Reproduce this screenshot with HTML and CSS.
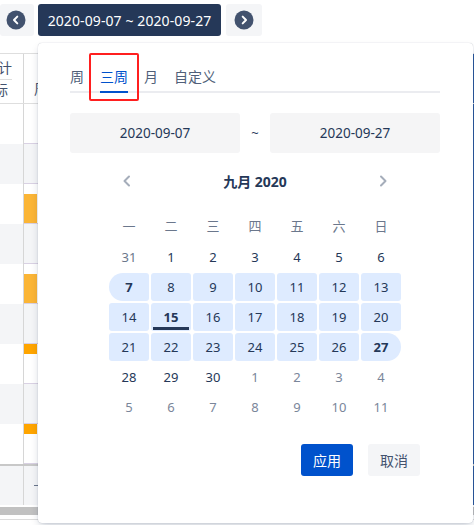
FILE: index.html
```html
<!DOCTYPE html>
<html lang="zh">
<head>
<meta charset="utf-8">
<link rel="stylesheet" href="styles.css">
</head>
<body>
<div class="page">
  <div class="toolbar">
    <button class="nav-btn prev" aria-label="上一段">
      <svg width="20" height="20" viewBox="0 0 20 20"><circle cx="10" cy="10" r="9.5" fill="#42526e"/><path d="M11.3 6.6 L8 10 L11.3 13.4" fill="none" stroke="#fff" stroke-width="2" stroke-linecap="round" stroke-linejoin="round"/></svg>
    </button>
    <button class="range-btn">2020-09-07 ~ 2020-09-27</button>
    <button class="nav-btn next" aria-label="下一段">
      <svg width="20" height="20" viewBox="0 0 20 20"><circle cx="10" cy="10" r="9.5" fill="#42526e"/><path d="M8.7 6.6 L12 10 L8.7 13.4" fill="none" stroke="#fff" stroke-width="2" stroke-linecap="round" stroke-linejoin="round"/></svg>
    </button>
  </div>

  <div class="table">
    <div class="row head">
      <div class="c1"><span class="h-top">计</span><span class="h-bot">际</span></div>
      <div class="c2"><span class="h-mid">周</span></div>
      <div class="c3"></div>
    </div>
    <div class="row"><div class="c1"></div><div class="c2"></div><div class="c3"></div></div>
    <div class="row alt"><div class="c1"></div><div class="c2"></div><div class="c3"></div></div>
    <div class="row"><div class="c1"></div><div class="c2"><div class="bar bar-lo"></div></div><div class="c3"></div></div>
    <div class="row alt"><div class="c1"></div><div class="c2"></div><div class="c3"></div></div>
    <div class="row"><div class="c1"></div><div class="c2"><div class="bar bar-lo"></div></div><div class="c3"></div></div>
    <div class="row alt"><div class="c1"></div><div class="c2"></div><div class="c3"></div></div>
    <div class="row"><div class="c1"></div><div class="c2"><div class="bar bar-hi"></div></div><div class="c3"></div></div>
    <div class="row alt"><div class="c1"></div><div class="c2"></div><div class="c3"></div></div>
    <div class="row"><div class="c1"></div><div class="c2"><div class="bar bar-hi"></div></div><div class="c3"></div></div>
    <div class="row foot"><div class="c1"></div><div class="c2"><span class="dash"></span></div><div class="c3"></div></div>
    <div class="scrollbar"></div>
    <div class="bottom-line"></div>
  </div>

  <div class="popup">
    <div class="tabs">
      <span class="tab">周</span>
      <span class="tab active">三周</span>
      <span class="tab">月</span>
      <span class="tab">自定义</span>
    </div>
    <div class="highlight"></div>

    <div class="inputs">
      <div class="date-input">2020-09-07</div>
      <span class="tilde">~</span>
      <div class="date-input">2020-09-27</div>
    </div>

    <div class="month-head">
      <svg class="chev" width="14" height="14" viewBox="0 0 14 14"><path d="M9 2.5 L4.5 7 L9 11.5" fill="none" stroke="#a5adba" stroke-width="2" stroke-linecap="round" stroke-linejoin="round"/></svg>
      <span class="month-title">九月 2020</span>
      <svg class="chev" width="14" height="14" viewBox="0 0 14 14"><path d="M5 2.5 L9.5 7 L5 11.5" fill="none" stroke="#a5adba" stroke-width="2" stroke-linecap="round" stroke-linejoin="round"/></svg>
    </div>

    <div class="weekdays">
      <span>一</span><span>二</span><span>三</span><span>四</span><span>五</span><span>六</span><span>日</span>
    </div>

    <div class="days">
      <span class="d prev-m">31</span><span class="d">1</span><span class="d">2</span><span class="d">3</span><span class="d">4</span><span class="d">5</span><span class="d">6</span>
      <span class="d in start">7</span><span class="d in">8</span><span class="d in">9</span><span class="d in">10</span><span class="d in">11</span><span class="d in">12</span><span class="d in">13</span>
      <span class="d in">14</span><span class="d in today">15</span><span class="d in">16</span><span class="d in">17</span><span class="d in">18</span><span class="d in">19</span><span class="d in">20</span>
      <span class="d in">21</span><span class="d in">22</span><span class="d in">23</span><span class="d in">24</span><span class="d in">25</span><span class="d in">26</span><span class="d in end">27</span>
      <span class="d">28</span><span class="d">29</span><span class="d">30</span><span class="d next-m">1</span><span class="d next-m">2</span><span class="d next-m">3</span><span class="d next-m">4</span>
      <span class="d next-m">5</span><span class="d next-m">6</span><span class="d next-m">7</span><span class="d next-m">8</span><span class="d next-m">9</span><span class="d next-m">10</span><span class="d next-m">11</span>
    </div>

    <div class="actions">
      <button class="btn primary">应用</button>
      <button class="btn subtle">取消</button>
    </div>
  </div>
</div>
</body>
</html>
```

FILE: styles.css
```css
* { box-sizing: border-box; }

html, body {
  margin: 0;
  padding: 0;
  background: #fff;
}

body {
  font-family: "Noto Sans", "Noto Sans CJK SC", sans-serif;
  color: #253858;
}

.page {
  position: relative;
  width: 474px;
  height: 525px;
  overflow: hidden;
}

button {
  font-family: inherit;
  border: 0;
  margin: 0;
  padding: 0;
  cursor: pointer;
}

/* toolbar */
.toolbar {
  display: flex;
  align-items: center;
  gap: 4px;
  padding-top: 4px;
  height: 36px;
}

.nav-btn {
  width: 34px;
  height: 32px;
  border-radius: 3px;
  background: #f4f5f7;
  display: flex;
  align-items: center;
  justify-content: center;
}

.nav-btn.prev { padding-right: 2px; }
.nav-btn.next { width: 36px; margin-left: 1px; }

.range-btn {
  width: 183px;
  height: 32px;
  border-radius: 3px;
  background: #253858;
  color: #fff;
  font-size: 14px;
  letter-spacing: 0.1px;
}

/* background table */
.table {
  margin-top: 17px;
  display: flex;
  flex-direction: column;
}

.row {
  display: flex;
  height: 40px;
  background: #fff;
}

.row.alt { background: #f4f5f7; }

.row .c1 {
  width: 24px;
  border-right: 1px solid #d6d6d6;
}

.row .c2 {
  flex: 1;
  border-bottom: 1px solid #d9d1e3;
  position: relative;
  display: flex;
  flex-direction: column;
}

.row .c3 {
  width: 2px;
  background: #2c5aa0;
}

.row.head {
  height: 51px;
  border-top: 1px solid #dedede;
  border-bottom: 1px solid #dedede;
}

.row.head .c1 {
  display: flex;
  flex-direction: column;
  overflow: hidden;
  font-size: 14px;
  color: #42526e;
  line-height: 20px;
}

.h-top {
  margin-left: -2px;
  margin-top: 4px;
  padding-bottom: 1px;
  width: 14px;
  border-bottom: 1px solid #dedede;
}

.h-bot {
  margin-left: -6px;
}

.row.head .c2 {
  border-bottom: 0;
  padding: 25px 0 0 10px;
  font-size: 14px;
  color: #42526e;
  line-height: 20px;
}

.bar { width: 13px; background: #fbb536; }
.bar-lo { margin-top: auto; height: 29px; }
.bar-hi { height: 10px; background: #ffa500; }

.row.foot {
  height: 41px;
  background: #f4f5f7;
  border-top: 2px solid #c8c8c8;
}

.row.foot .c2 {
  border-bottom: 0;
  padding: 19px 0 0 10px;
}

.dash {
  display: block;
  width: 6px;
  height: 1px;
  background: #6b778c;
}

.scrollbar {
  margin-top: 2px;
  height: 8px;
  background: #c1c1c1;
}

.bottom-line {
  margin-top: 4px;
  height: 1px;
  background: #dcdcdc;
}

/* popup */
.popup {
  position: absolute;
  left: 38px;
  top: 43px;
  width: 435px;
  height: 480px;
  background: #fff;
  border-radius: 4px;
  box-shadow: 0 4px 8px -2px rgba(9, 30, 66, 0.25), 0 0 1px rgba(9, 30, 66, 0.31);
  padding: 24px 33px 0 32px;
}

.tabs {
  display: flex;
  gap: 16px;
  border-bottom: 2px solid #ebecf0;
}

.tab {
  font-size: 14px;
  line-height: 20px;
  color: #505f79;
  padding-bottom: 4px;
  border-bottom: 2px solid transparent;
  margin-bottom: -2px;
}

.tab.active {
  color: #0052cc;
  border-bottom-color: #0052cc;
}

.highlight {
  position: absolute;
  left: 51px;
  top: 10px;
  width: 50px;
  height: 48px;
  border: 2px solid #ff1f1f;
  border-radius: 2px;
}

.inputs {
  margin-top: 20px;
  display: flex;
  align-items: center;
}

.date-input {
  width: 170px;
  height: 40px;
  border-radius: 3px;
  background: #f5f5f6;
  display: flex;
  align-items: center;
  justify-content: center;
  font-size: 13.5px;
  color: #253858;
}

.tilde {
  flex: 1;
  text-align: center;
  font-size: 13px;
  color: #253858;
}

.month-head {
  margin-top: 14px;
  height: 28px;
  padding: 0 50px;
  display: flex;
  align-items: center;
  justify-content: space-between;
}

.month-title {
  font-size: 14px;
  font-weight: 700;
  color: #253858;
}

.weekdays,
.days {
  width: 292px;
  margin: 0 auto;
  display: grid;
  grid-template-columns: repeat(7, 40px);
  column-gap: 2px;
}

.weekdays {
  margin-top: 16px;
  margin-bottom: 4px;
  grid-auto-rows: 28px;
}

.weekdays span {
  display: flex;
  align-items: center;
  justify-content: center;
  font-size: 13px;
  color: #6b778c;
}

.days {
  grid-auto-rows: 28px;
  row-gap: 2px;
}

.d {
  position: relative;
  display: flex;
  align-items: center;
  justify-content: center;
  font-size: 13px;
  color: #253858;
  border-radius: 3px;
}

.d.prev-m { color: #6b778c; }
.d.next-m { color: #7a869a; }

.d.in { background: #deebff; }

.d.start {
  border-radius: 14px 3px 3px 14px;
  font-weight: 700;
}

.d.end {
  border-radius: 3px 14px 14px 3px;
  font-weight: 700;
}

.d.today { font-weight: 700; }

.d.today::after {
  content: "";
  position: absolute;
  left: 2px;
  right: 2px;
  bottom: 1px;
  height: 3px;
  background: #253858;
}

.actions {
  margin-top: 23px;
  padding-right: 20px;
  display: flex;
  justify-content: flex-end;
  gap: 15px;
}

.btn {
  width: 52px;
  height: 32px;
  border-radius: 3px;
  font-size: 14px;
}

.btn.primary {
  background: #0052cc;
  color: #fff;
}

.btn.subtle {
  background: #f4f5f7;
  color: #42526e;
}
```
